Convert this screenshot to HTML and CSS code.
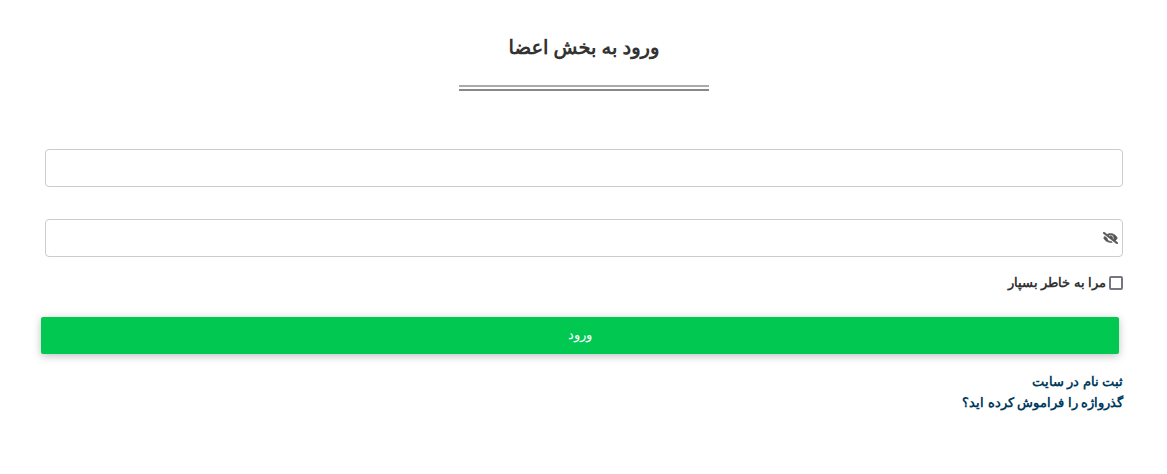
FILE: index.html
```html
<!DOCTYPE html>
<html lang="fa" dir="rtl">
	<head>
		<meta charset="utf-8" />
		<title>ورود به بخش اعضا</title>
		<link rel="stylesheet" href="styles.css">
	</head>
	<body>
		<div class="login">
			<h1 class="title">ورود به بخش اعضا</h1>
			<div class="sep"></div>
			<form class="form">
				<div class="field"><input class="inp" type="text" /></div>
				<div class="field field-pass">
					<input class="inp" type="password" />
					<svg class="eye" viewBox="0 0 640 512" width="15" height="12"><path d="M320 400c-75.900 0-137.300-58.700-142.900-133.100L72.200 185.800c-13.800 17.300-26.500 35.600-36.700 55.600a32.400 32.400 0 0 0 0 29.200C89.700 376.400 197.100 448 320 448c26.900 0 52.900-4 77.900-10.500L346 397.400a144.100 144.100 0 0 1-26 2.600zm313.800 58.100l-110.600-85.400a331.200 331.200 0 0 0 81.300-102.100 32.400 32.400 0 0 0 0-29.200C550.300 135.600 442.900 64 320 64a308.200 308.200 0 0 0-147.300 37.700L45.500 3.400A16 16 0 0 0 23 6.200L3.400 31.500A16 16 0 0 0 6.200 54l588.300 454.700a16 16 0 0 0 22.500-2.800l19.600-25.300a16 16 0 0 0-2.800-22.500zm-183.700-142l-39.300-30.400A94.800 94.800 0 0 0 416 256a94.800 94.800 0 0 0-121.300-92.200A47.700 47.700 0 0 1 304 192a46.600 46.600 0 0 1-1.500 10l-73.600-56.900A142.300 142.300 0 0 1 320 112a143.900 143.900 0 0 1 144 144c0 21.600-5.300 41.800-13.900 60.100z"/></svg>
				</div>
				<label class="remember"><input class="chk" type="checkbox" /><span class="rem-txt">مرا به خاطر بسپار</span></label>
				<button class="btn" type="button">ورود</button>
				<div class="links">
					<a href="#">ثبت نام در سایت</a>
					<a href="#">گذرواژه را فراموش کرده اید؟</a>
				</div>
			</form>
		</div>
	</body>
</html>
```

FILE: styles.css
```css
body{margin: 0; background-color: #fff; color: #333; font-family: "Noto Sans", sans-serif;}
.login{padding: 0 44px 0 45px;}
.title{margin: 0; padding-top: 35px; height: 50px; font-size: 19.5px; line-height: 24px; font-weight: bold; text-align: center; text-rendering: geometricPrecision;}
.sep{width: 250px; height: 2px; margin: 0 auto; border-top: 2px solid #aaa; border-bottom: 2px solid #888;}
.form{margin-top: 58px;}
.field{position: relative; height: 38px; margin-bottom: 32px;}
.field-pass{margin-bottom: 18px;}
.inp{display: block; box-sizing: border-box; width: 100%; height: 38px; border: 1px solid #ccc; border-radius: 4px; background-color: #fff; outline: none;}
.eye{position: absolute; right: 5px; top: 13px; fill: #555; stroke: #555; stroke-width: 25px;}
.remember{display: flex; align-items: center; gap: 3px; height: 16px; font-size: 13px; font-weight: bold;}
.rem-txt{padding-bottom: 2px;}
.chk{appearance: none; box-sizing: border-box; width: 14px; height: 14px; margin: 0; border: 2px solid #767680; border-radius: 2px; background-color: #fff;}
.btn{display: block; box-sizing: border-box; width: 100%; height: 37px; margin: 26px 4px 0 -4px; padding: 0 0 3px; border: 0; border-radius: 2px; background-color: #00c851; color: #fff; font: 13px "Noto Sans", sans-serif; box-shadow: 0 2px 8px rgba(0,0,0,.25);}
.links{display: flex; flex-direction: column; margin-top: 17px; font-size: 13px; font-weight: bold; line-height: 21px;}
.links a{color: #003a5d; text-decoration: none;}
```
